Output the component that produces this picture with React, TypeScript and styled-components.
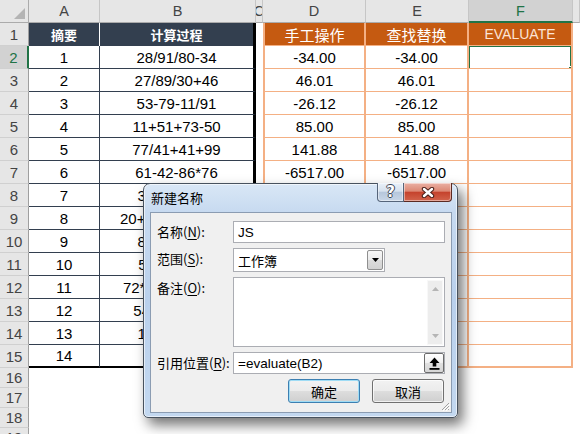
import styled, { createGlobalStyle, css } from 'styled-components';

const GlobalStyle = createGlobalStyle`
  html, body {
    margin: 0;
    padding: 0;
    background: #fff;
  }
  body {
    font-family: "Liberation Sans", "Noto Sans CJK SC", sans-serif;
    overflow: hidden;
  }
  * {
    box-sizing: border-box;
  }
`;

const CJK = `"Noto Sans CJK SC", "Liberation Sans", sans-serif`;
const ORANGE_LINE = '#f4b084';
const DARK = '#333f4f';
const GREEN = '#217346';

const Screen = styled.div`
  position: relative;
  width: 580px;
  height: 434px;
  overflow: hidden;
  background: #fff;
`;

const Sheet = styled.div`
  display: grid;
  grid-template-columns: 29px 71px 156px 7px 103px 103px 104px 1fr;
  grid-template-rows: 23px repeat(15, 23px) repeat(4, 20px);
`;

const headerBand = css`
  background: #e6e6e6;
  color: #444;
  font-size: 15px;
  display: flex;
  align-items: center;
  justify-content: center;
  overflow: hidden;
`;

const Corner = styled.div`
  ${headerBand};
  align-items: flex-end;
  justify-content: flex-end;
  padding: 0 3px 3px 0;
  border-right: 1px solid #ababab;
  border-bottom: 1px solid #ababab;
`;

const CornerMark = styled.span`
  width: 0;
  height: 0;
  border-left: 11px solid transparent;
  border-bottom: 11px solid #b4b4b4;
`;

const ColHead = styled.div<{ $active?: boolean }>`
  ${headerBand};
  font-size: 14.5px;
  border-right: 1px solid #c6c6c6;
  border-bottom: 1px solid #ababab;
  ${({ $active }) =>
    $active &&
    css`
      background: #d2d2d2;
      color: ${GREEN};
      border-bottom: 2px solid ${GREEN};
    `}
`;

const RowHead = styled.div<{ $active?: boolean }>`
  ${headerBand};
  border-right: 1px solid #9f9f9f;
  border-bottom: 1px solid #d0d0d0;
  ${({ $active }) =>
    $active &&
    css`
      background: #d2d2d2;
      color: ${GREEN};
      border-right: 2px solid ${GREEN};
    `}
`;

const cellText = css`
  display: flex;
  align-items: center;
  justify-content: center;
  white-space: nowrap;
  overflow: hidden;
  font-size: 15px;
  color: #000;
`;

const DarkHead = styled.div<{ $wide?: boolean }>`
  ${cellText};
  background: ${DARK};
  color: #fff;
  font-family: ${CJK};
  font-weight: 700;
  font-size: 13px;
  border-right: ${({ $wide }) => ($wide ? '3px solid #000' : '1px solid #fff')};
`;

const DarkCell = styled.div<{ $wide?: boolean; $last?: boolean }>`
  ${cellText};
  border-right: ${({ $wide }) => ($wide ? '3px solid #000' : `1px solid ${DARK}`)};
  border-bottom: ${({ $last }) => ($last ? '2px solid #000' : `1px solid ${DARK}`)};
`;

const Gap = styled.div``;

const OrangeHead = styled.div<{ $first?: boolean; $latin?: boolean }>`
  ${cellText};
  background: #c55a11;
  color: ${({ $latin }) => ($latin ? '#fce4d6' : '#fff')};
  font-family: ${({ $latin }) => ($latin ? `"Liberation Sans", sans-serif` : CJK)};
  font-size: ${({ $latin }) => ($latin ? '14px' : '15px')};
  border-right: 2px solid ${ORANGE_LINE};
  border-bottom: 1px solid ${ORANGE_LINE};
  border-left: ${({ $first }) => ($first ? `2px solid ${ORANGE_LINE}` : 'none')};
`;

const OrangeCell = styled.div<{ $first?: boolean; $last?: boolean }>`
  ${cellText};
  position: relative;
  border-right: 2px solid ${ORANGE_LINE};
  border-bottom: ${({ $last }) => ($last ? '2px' : '1px')} solid ${ORANGE_LINE};
  border-left: ${({ $first }) => ($first ? `2px solid ${ORANGE_LINE}` : 'none')};
`;

const Selection = styled.div`
  position: absolute;
  top: -1px;
  left: -1px;
  right: -1px;
  bottom: -2px;
  border: 2px solid ${GREEN};
`;

const FillHandle = styled.span`
  position: absolute;
  right: -5px;
  bottom: -5px;
  width: 7px;
  height: 7px;
  background: ${GREEN};
  border: 1px solid #fff;
`;

/* ---------- dialog ---------- */

const Dialog = styled.div`
  position: absolute;
  left: 143px;
  top: 183px;
  width: 315px;
  height: 235px;
  display: flex;
  flex-direction: column;
  padding: 0 5px 4px 6px;
  border: 1px solid #48525e;
  border-radius: 7px 7px 5px 5px;
  background: linear-gradient(180deg, #d9e7f6 0%, #c7daf0 12%, #b9d0ec 50%, #c3d8f0 100%);
  box-shadow: 5px 7px 13px rgba(0, 0, 0, 0.55), inset 0 0 0 1px rgba(255, 255, 255, 0.6);
`;

const TitleBar = styled.div`
  height: 28px;
  display: flex;
  align-items: flex-start;
  justify-content: space-between;
`;

const Title = styled.span`
  padding: 6px 0 0 1px;
  font-family: ${CJK};
  font-size: 13px;
  line-height: 16px;
  color: #000;
`;

const CaptionButtons = styled.div`
  display: flex;
  margin-top: -1px;
`;

const CaptionButton = styled.div<{ $close?: boolean }>`
  height: 19px;
  width: ${({ $close }) => ($close ? '48px' : '27px')};
  display: flex;
  align-items: center;
  justify-content: center;
  border: 1px solid ${({ $close }) => ($close ? '#5b2a22' : '#56657a')};
  border-top: none;
  border-left: ${({ $close }) => ($close ? 'none' : undefined)};
  border-radius: ${({ $close }) => ($close ? '0 0 4px 0' : '0 0 0 4px')};
  background: ${({ $close }) =>
    $close
      ? 'linear-gradient(180deg, #eab0a3 0%, #dc8874 45%, #c5432d 52%, #d2644c 100%)'
      : 'linear-gradient(180deg, #e9f0f8 0%, #d6e1ee 45%, #b6c7dc 52%, #c8d6e7 100%)'};
  box-shadow: inset 0 0 0 1px rgba(255, 255, 255, 0.45);
`;

const HelpGlyph = styled.span`
  font-family: "DejaVu Sans", sans-serif;
  font-weight: 700;
  font-size: 15px;
  line-height: 15px;
  color: #fff;
  text-shadow: 1px 0 0 #3d4654, -1px 0 0 #3d4654, 0 1px 0 #3d4654, 0 -1px 0 #3d4654;
`;

const Body = styled.div`
  position: relative;
  flex: 1;
  display: grid;
  grid-template-columns: 76px 1fr;
  grid-auto-rows: auto;
  row-gap: 5px;
  align-content: start;
  padding: 8px 6px 9px 6px;
  border: 1px solid #8b9cb2;
  background: #f0f0f0;
  font-family: ${CJK};
  font-size: 13px;
  color: #000;
`;

const Label = styled.div`
  padding-top: 2px;
  line-height: 17px;
  white-space: nowrap;
`;

const Mnemonic = styled.span`
  text-decoration: underline;
  text-underline-offset: 2px;
`;

const Field = styled.div<{ $height?: number; $width?: number }>`
  height: ${({ $height }) => $height ?? 22}px;
  width: ${({ $width }) => ($width ? `${$width}px` : 'auto')};
  display: flex;
  align-items: center;
  padding-left: 4px;
  background: #fff;
  border: 1px solid #abadb3;
  overflow: hidden;
`;

const FieldText = styled.span<{ $cjk?: boolean }>`
  flex: 1;
  font-family: ${({ $cjk }) => ($cjk ? CJK : `"Liberation Sans", sans-serif`)};
  font-size: ${({ $cjk }) => ($cjk ? '13px' : '13.5px')};
`;

const DropButton = styled.div`
  width: 16px;
  align-self: stretch;
  margin: 1px;
  display: flex;
  align-items: center;
  justify-content: center;
  border: 1px solid #8f8f8f;
  border-radius: 2px;
  background: linear-gradient(180deg, #f7f7f7 0%, #ececec 50%, #dcdcdc 51%, #d2d2d2 100%);
`;

const NoteArea = styled.div`
  height: 70px;
  display: flex;
  justify-content: flex-end;
  padding: 2px 1px 1px;
  background: #fff;
  border: 1px solid #abadb3;
`;

const ScrollTrack = styled.div`
  width: 16px;
  display: flex;
  flex-direction: column;
  justify-content: space-between;
  align-items: center;
  padding: 6px 0;
  background: #ededed;
  border: 1px solid #f8f8f8;
`;

const RefButton = styled.div`
  width: 20px;
  align-self: stretch;
  display: flex;
  align-items: center;
  justify-content: center;
  border: 1px solid #6c6c6c;
  border-radius: 2px;
  background: linear-gradient(180deg, #ffffff 0%, #f0f0f0 50%, #e0e0e0 51%, #d6d6d6 100%);
`;

const ButtonRow = styled.div`
  grid-column: 1 / -1;
  display: flex;
  justify-content: flex-end;
  gap: 12px;
  padding-right: 1px;
`;

const PushButton = styled.div<{ $default?: boolean }>`
  width: 72px;
  height: 24px;
  display: flex;
  align-items: center;
  justify-content: center;
  border: 1px solid ${({ $default }) => ($default ? '#3c7fb1' : '#707070')};
  border-radius: 3px;
  background: linear-gradient(180deg, #f2f2f2 0%, #ebebeb 48%, #dddddd 52%, #cfcfcf 100%);
  box-shadow: inset 0 0 0 1px ${({ $default }) => ($default ? '#9fdcf5' : 'rgba(255,255,255,0.7)')};
  font-family: ${CJK};
  font-size: 13px;
`;

const Grip = styled.svg`
  position: absolute;
  right: 1px;
  bottom: 1px;
`;

const rows = [
  { expr: '28/91/80-34', val: '-34.00' },
  { expr: '27/89/30+46', val: '46.01' },
  { expr: '53-79-11/91', val: '-26.12' },
  { expr: '11+51+73-50', val: '85.00' },
  { expr: '77/41+41+99', val: '141.88' },
  { expr: '61-42-86*76', val: '-6517.00' },
  { expr: '36+15*4-27', val: '69.00' },
  { expr: '20+54/32*81-3*7', val: '135.69' },
  { expr: '8+97-13*45', val: '-480.00' },
  { expr: '56/7+81-24', val: '65.00' },
  { expr: '72*15/36+49-83', val: '-4.00' },
  { expr: '54-18+33*21', val: '729.00' },
  { expr: '19+64-37*5', val: '-102.00' },
  { expr: '9*6+45', val: '99.00' },
];

const columns = ['A', 'B', 'C', 'D', 'E', 'F', ''];

export default function App() {
  return (
    <Screen>
      <GlobalStyle />
      <Sheet>
        <Corner>
          <CornerMark />
        </Corner>
        {columns.map((c, i) => (
          <ColHead key={i} $active={c === 'F'}>
            {c}
          </ColHead>
        ))}

        <RowHead>1</RowHead>
        <DarkHead>摘要</DarkHead>
        <DarkHead $wide>计算过程</DarkHead>
        <Gap />
        <OrangeHead $first>手工操作</OrangeHead>
        <OrangeHead>查找替换</OrangeHead>
        <OrangeHead $latin>EVALUATE</OrangeHead>
        <Gap />

        {rows.map((r, i) => {
          const last = i === rows.length - 1;
          return [
            <RowHead key={`h${i}`} $active={i === 0}>
              {i + 2}
            </RowHead>,
            <DarkCell key={`a${i}`} $last={last}>
              {i + 1}
            </DarkCell>,
            <DarkCell key={`b${i}`} $wide $last={last}>
              {r.expr}
            </DarkCell>,
            <Gap key={`c${i}`} />,
            <OrangeCell key={`d${i}`} $first $last={last}>
              {r.val}
            </OrangeCell>,
            <OrangeCell key={`e${i}`} $last={last}>
              {r.val}
            </OrangeCell>,
            <OrangeCell key={`f${i}`} $last={last}>
              {i === 0 && (
                <Selection>
                  <FillHandle />
                </Selection>
              )}
            </OrangeCell>,
            <Gap key={`g${i}`} />,
          ];
        })}

        {[16, 17, 18, 19].map((n) => [
          <RowHead key={`h${n}`}>{n}</RowHead>,
          ...columns.map((_, j) => <Gap key={`x${n}-${j}`} />),
        ])}
      </Sheet>

      <Dialog>
        <TitleBar>
          <Title>新建名称</Title>
          <CaptionButtons>
            <CaptionButton>
              <HelpGlyph>?</HelpGlyph>
            </CaptionButton>
            <CaptionButton $close>
              <svg width="14" height="11" viewBox="0 0 14 11">
                <path d="M3 2 L11 9 M11 2 L3 9" stroke="#4a2019" strokeWidth="4.4" strokeLinecap="round" />
                <path d="M3 2 L11 9 M11 2 L3 9" stroke="#fff" strokeWidth="2.4" strokeLinecap="round" />
              </svg>
            </CaptionButton>
          </CaptionButtons>
        </TitleBar>

        <Body>
          <Label>
            名称(<Mnemonic>N</Mnemonic>):
          </Label>
          <Field>
            <FieldText>JS</FieldText>
          </Field>

          <Label>
            范围(<Mnemonic>S</Mnemonic>):
          </Label>
          <Field $height={24} $width={152}>
            <FieldText $cjk>工作簿</FieldText>
            <DropButton>
              <svg width="7" height="4" viewBox="0 0 7 4">
                <path d="M0 0 H7 L3.5 4 Z" fill="#000" />
              </svg>
            </DropButton>
          </Field>

          <Label>
            备注(<Mnemonic>O</Mnemonic>):
          </Label>
          <NoteArea>
            <ScrollTrack>
              <svg width="7" height="4" viewBox="0 0 7 4">
                <path d="M0 4 H7 L3.5 0 Z" fill="#b5b5b5" />
              </svg>
              <svg width="7" height="4" viewBox="0 0 7 4">
                <path d="M0 0 H7 L3.5 4 Z" fill="#b5b5b5" />
              </svg>
            </ScrollTrack>
          </NoteArea>

          <Label>
            引用位置(<Mnemonic>R</Mnemonic>):
          </Label>
          <Field>
            <FieldText>=evaluate(B2)</FieldText>
            <RefButton>
              <svg width="11" height="13" viewBox="0 0 11 13">
                <path d="M5.5 0.5 L10.5 6 H7.3 V9.5 H3.7 V6 H0.5 Z" fill="#000" />
                <rect x="0.5" y="11" width="10" height="1.8" fill="#000" />
              </svg>
            </RefButton>
          </Field>

          <ButtonRow>
            <PushButton $default>确定</PushButton>
            <PushButton>取消</PushButton>
          </ButtonRow>

          <Grip width="10" height="10" viewBox="0 0 10 10">
            <path d="M9 2 L2 9 M9 5 L5 9 M9 8 L8 9" stroke="#a0a0a0" strokeWidth="1" />
            <path d="M10 3 L3 10 M10 6 L6 10" stroke="#fff" strokeWidth="1" />
          </Grip>
        </Body>
      </Dialog>
    </Screen>
  );
}
